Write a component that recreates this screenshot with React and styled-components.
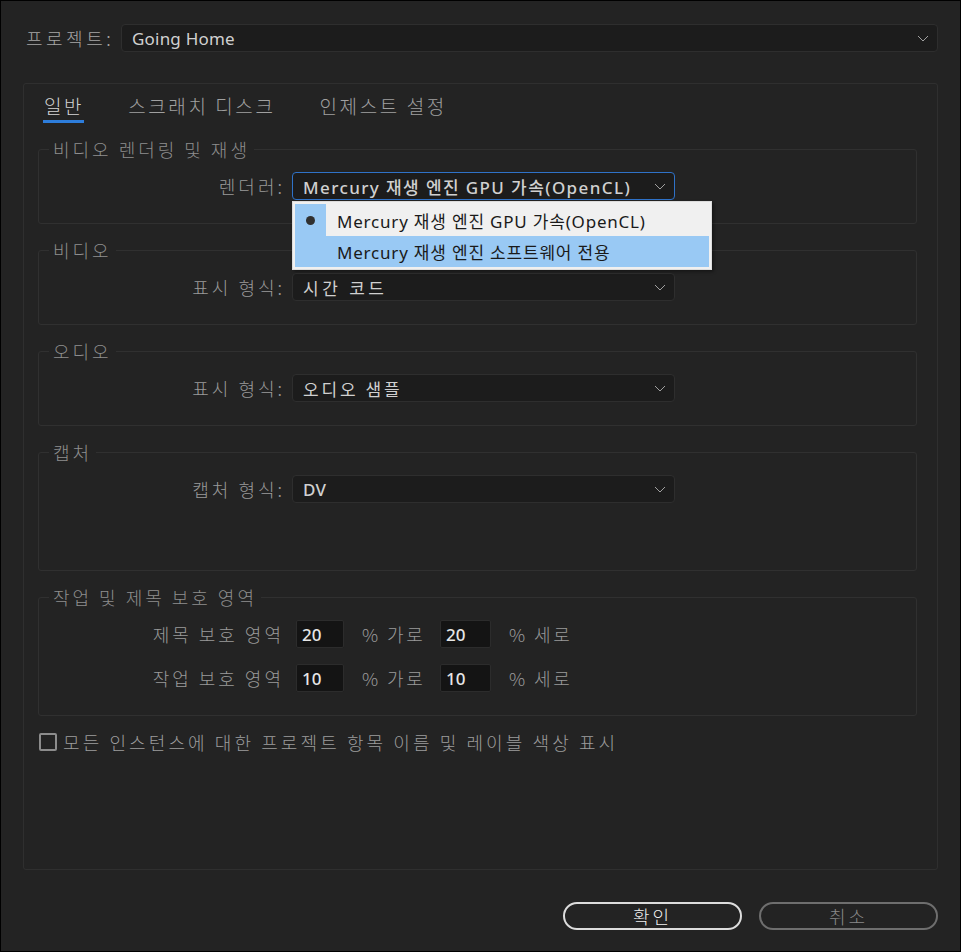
import React from 'react';
import styled, { createGlobalStyle } from 'styled-components';

const GlobalStyle = createGlobalStyle`
    html, body {
        margin: 0;
        padding: 0;
        background: #232323;
    }
    * {
        box-sizing: border-box;
    }
`;

const KO = `"Noto Sans CJK KR", "Noto Sans", sans-serif`;
const LATIN = `"Noto Sans", "Noto Sans CJK KR", sans-serif`;

function Chevron() {
    return (
        <svg width="12" height="7" viewBox="0 0 12 7">
            <polyline
                points="1,1 6,6 11,1"
                fill="none"
                stroke="#a0a0a0"
                strokeWidth="1"
            />
        </svg>
    );
}

export default function App() {
    return (
        <>
            <GlobalStyle />
            <Window>
                <ProjectRow>
                    <ProjectLabel>프로젝트:</ProjectLabel>
                    <Select>
                        <SelectValue>Going Home</SelectValue>
                        <Chevron />
                    </Select>
                </ProjectRow>

                <Panel>
                    <Tabs>
                        <Tab active>일반</Tab>
                        <Tab>스크래치 디스크</Tab>
                        <Tab>인제스트 설정</Tab>
                    </Tabs>

                    <Groups>
                        <Group height={87}>
                            <Legend>비디오 렌더링 및 재생</Legend>
                            <FieldRow>
                                <FieldLabel>렌더러:</FieldLabel>
                                <SelectWrap>
                                    <Select focused>
                                        <SelectValue strong spacing={1.4}>
                                            Mercury 재생 엔진 GPU 가속(OpenCL)
                                        </SelectValue>
                                        <Chevron />
                                    </Select>
                                    <Menu>
                                        <MenuItem>
                                            <Gutter checked>
                                                <Bullet />
                                            </Gutter>
                                            <MenuText>
                                                Mercury 재생 엔진 GPU 가속(OpenCL)
                                            </MenuText>
                                        </MenuItem>
                                        <MenuItem hovered>
                                            <Gutter checked />
                                            <MenuText>
                                                Mercury 재생 엔진 소프트웨어 전용
                                            </MenuText>
                                        </MenuItem>
                                    </Menu>
                                </SelectWrap>
                            </FieldRow>
                        </Group>

                        <Group height={87}>
                            <Legend>비디오</Legend>
                            <FieldRow>
                                <FieldLabel>표시 형식:</FieldLabel>
                                <Select>
                                    <SelectValue spacing={3.5}>시간 코드</SelectValue>
                                    <Chevron />
                                </Select>
                            </FieldRow>
                        </Group>

                        <Group height={87}>
                            <Legend>오디오</Legend>
                            <FieldRow>
                                <FieldLabel>표시 형식:</FieldLabel>
                                <Select>
                                    <SelectValue spacing={2.8}>오디오 샘플</SelectValue>
                                    <Chevron />
                                </Select>
                            </FieldRow>
                        </Group>

                        <Group height={131}>
                            <Legend>캡처</Legend>
                            <FieldRow>
                                <FieldLabel>캡처 형식:</FieldLabel>
                                <Select>
                                    <SelectValue strong>DV</SelectValue>
                                    <Chevron />
                                </Select>
                            </FieldRow>
                        </Group>

                        <Group height={131}>
                            <Legend>작업 및 제목 보호 영역</Legend>
                            <SafeRows>
                                <SafeRow>
                                    <SafeLabel>제목 보호 영역</SafeLabel>
                                    <NumberBox>20</NumberBox>
                                    <Unit>% 가로</Unit>
                                    <NumberBox wide>20</NumberBox>
                                    <Unit>% 세로</Unit>
                                </SafeRow>
                                <SafeRow>
                                    <SafeLabel>작업 보호 영역</SafeLabel>
                                    <NumberBox>10</NumberBox>
                                    <Unit>% 가로</Unit>
                                    <NumberBox wide>10</NumberBox>
                                    <Unit>% 세로</Unit>
                                </SafeRow>
                            </SafeRows>
                        </Group>
                    </Groups>

                    <CheckRow>
                        <CheckBox />
                        <CheckText>
                            모든 인스턴스에 대한 프로젝트 항목 이름 및 레이블 색상 표시
                        </CheckText>
                    </CheckRow>
                </Panel>

                <Buttons>
                    <Button primary>확인</Button>
                    <Button>취소</Button>
                </Buttons>
            </Window>
        </>
    );
}

const Window = styled.div`
    width: 961px;
    height: 952px;
    background: #232323;
    border: 1px solid #000;
    padding: 23px 22px 0 22px;
    display: flex;
    flex-direction: column;
    font-family: ${KO};
    font-weight: 300;
`;

const ProjectRow = styled.div`
    display: grid;
    grid-template-columns: 98px 1fr;
    height: 28px;
`;

const ProjectLabel = styled.div`
    padding-left: 3px;
    font-size: 18px;
    line-height: 28px;
    letter-spacing: 3.5px;
    color: #a6a6a6;
`;

const Select = styled.div`
    height: 28px;
    display: flex;
    align-items: center;
    justify-content: space-between;
    padding: 0 8px 0 10px;
    background: #1c1c1c;
    border: 1px solid ${(p) => (p.focused ? '#2f72c8' : '#2e2e2e')};
    border-radius: 4px;
`;

const SelectValue = styled.span`
    font-family: ${LATIN};
    font-size: 17px;
    font-weight: ${(p) => (p.strong ? 500 : 400)};
    color: #d0d0d0;
    white-space: nowrap;
    letter-spacing: ${(p) => p.spacing ?? 0.2}px;
`;

const Panel = styled.div`
    margin-top: 31px;
    height: 787px;
    border: 1px solid #2f2f2f;
    border-radius: 3px;
    padding: 0 20px 0 14px;
    display: flex;
    flex-direction: column;
`;

const Tabs = styled.div`
    display: flex;
    gap: 43px;
    padding-left: 5px;
    margin-top: 10px;
`;

const Tab = styled.div`
    font-size: 19px;
    line-height: 24px;
    letter-spacing: 2.6px;
    padding: 0 0 2px 1px;
    color: ${(p) => (p.active ? '#d4d4d4' : '#a0a0a0')};
    border-bottom: 3px solid ${(p) => (p.active ? '#2d7ddb' : 'transparent')};
`;

const Groups = styled.div`
    margin-top: 14px;
    display: flex;
    flex-direction: column;
    gap: 14px;
`;

const Group = styled.fieldset`
    margin: 0;
    padding: 11px 0 0 0;
    height: ${(p) => p.height}px;
    border: 1px solid #303030;
    border-radius: 3px;
    min-inline-size: 0;
`;

const Legend = styled.legend`
    margin-left: 10px;
    padding: 0 4px;
    font-size: 18px;
    line-height: 24px;
    letter-spacing: 3px;
    color: #8e8e8e;
`;

const FieldRow = styled.div`
    display: grid;
    grid-template-columns: 246px 383px;
    column-gap: 7px;
    align-items: center;
`;

const FieldLabel = styled.div`
    text-align: right;
    font-size: 18px;
    letter-spacing: 3px;
    color: #9a9a9a;
`;

const SelectWrap = styled.div`
    position: relative;
`;

const Menu = styled.div`
    position: absolute;
    top: 29px;
    left: 0;
    width: 420px;
    background: #f0f0f0;
    border: 1px solid #dcdcdc;
    padding: 2px;
    box-shadow: 2px 2px 3px rgba(0, 0, 0, 0.35);
    z-index: 2;
`;

const MenuItem = styled.div`
    display: flex;
    align-items: stretch;
    height: ${(p) => (p.hovered ? 31 : 32)}px;
    background: ${(p) => (p.hovered ? '#99c9f4' : 'transparent')};
`;

const Gutter = styled.div`
    width: 31px;
    display: flex;
    align-items: center;
    justify-content: center;
    background: ${(p) => (p.checked ? '#99c9f4' : 'transparent')};
`;

const Bullet = styled.span`
    width: 9px;
    height: 9px;
    border-radius: 50%;
    background: #303030;
`;

const MenuText = styled.div`
    display: flex;
    align-items: center;
    padding-left: 11px;
    font-family: ${LATIN};
    font-size: 17px;
    font-weight: 400;
    letter-spacing: 0.8px;
    color: #1a1a1a;
    white-space: nowrap;
`;

const SafeRows = styled.div`
    display: flex;
    flex-direction: column;
    gap: 16px;
`;

const SafeRow = styled.div`
    display: flex;
    align-items: center;
    height: 28px;
`;

const SafeLabel = styled.div`
    width: 245px;
    margin-right: 12px;
    text-align: right;
    font-size: 18px;
    letter-spacing: 3px;
    color: #9a9a9a;
`;

const NumberBox = styled.div`
    width: ${(p) => (p.wide ? 51 : 48)}px;
    height: 28px;
    padding-left: 5px;
    display: flex;
    align-items: center;
    background: #141414;
    border: 1px solid #2c2c2c;
    border-radius: 2px;
    font-family: ${LATIN};
    font-size: 17px;
    font-weight: 500;
    color: #e6e6e6;
`;

const Unit = styled.div`
    width: 78px;
    margin-left: 18px;
    font-size: 18px;
    letter-spacing: 2.5px;
    color: #9a9a9a;
`;

const CheckRow = styled.div`
    margin-top: 13px;
    margin-left: 1px;
    display: flex;
    align-items: center;
    gap: 6px;
`;

const CheckBox = styled.span`
    width: 18px;
    height: 18px;
    border: 2px solid #8c8c8c;
    border-radius: 2px;
`;

const CheckText = styled.div`
    font-size: 18px;
    letter-spacing: 3.1px;
    color: #9c9c9c;
`;

const Buttons = styled.div`
    margin-top: 32px;
    display: flex;
    justify-content: flex-end;
    gap: 17px;
`;

const Button = styled.div`
    width: 179px;
    height: 28px;
    display: flex;
    align-items: center;
    justify-content: center;
    border: 2px solid ${(p) => (p.primary ? '#dcdcdc' : '#6e6e6e')};
    border-radius: 14px;
    font-size: 18px;
    letter-spacing: 3px;
    color: ${(p) => (p.primary ? '#f0f0f0' : '#8a8a8a')};
`;
